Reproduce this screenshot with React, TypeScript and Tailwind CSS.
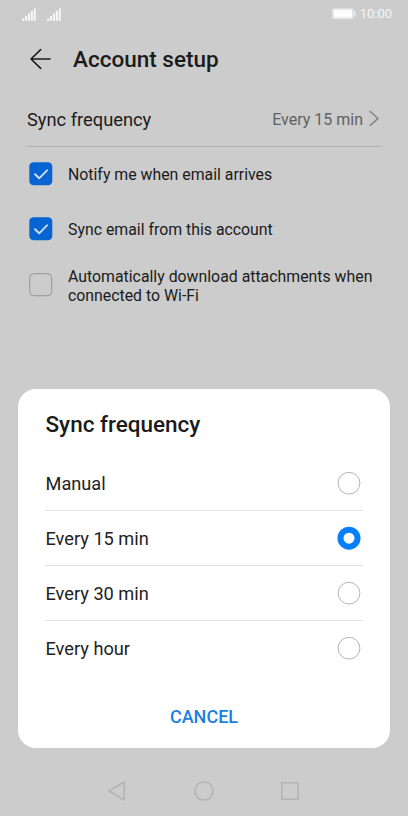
import { useState } from "react";

const frequencies = ["Manual", "Every 15 min", "Every 30 min", "Every hour"];

const initialSettings = [
  { id: "notify", label: "Notify me when email arrives", checked: true },
  { id: "sync", label: "Sync email from this account", checked: true },
  {
    id: "download",
    label: "Automatically download attachments when connected to Wi-Fi",
    checked: false,
  },
];

function SignalIcon() {
  return (
    <svg width="14" height="13" viewBox="0 0 14 13" fill="#f7f7f7">
      <rect x="0.2" y="10.3" width="2" height="2.5" />
      <rect x="3.1" y="8" width="2" height="4.8" />
      <rect x="6" y="5.3" width="2" height="7.5" />
      <rect x="8.9" y="2.9" width="2" height="9.9" />
      <rect x="11.8" y="0.4" width="2" height="12.4" />
    </svg>
  );
}

function BatteryIcon() {
  return (
    <svg width="24" height="12" viewBox="0 0 24 12">
      <rect x="0.2" y="0.3" width="21.4" height="10.9" rx="1.8" fill="#e4e4e4" />
      <rect x="1.8" y="1.8" width="18.2" height="7.8" rx="0.5" fill="#fcfcfc" />
      <rect x="22" y="3" width="1.3" height="5.4" rx="0.5" fill="#f0f0f0" />
    </svg>
  );
}

function Checkbox({ checked }: { checked: boolean }) {
  if (!checked) {
    return (
      <svg width="24" height="24" viewBox="0 0 24 24" className="shrink-0">
        <rect x="0.7" y="0.7" width="22" height="22" rx="4" fill="none" stroke="#979797" />
      </svg>
    );
  }
  return (
    <svg width="24" height="24" viewBox="0 0 24 24" className="shrink-0">
      <rect x="0.3" y="0.2" width="23" height="23" rx="4.2" fill="#0764d2" />
      <path
        d="M6 12.2l4.2 4.1 7.8-8"
        fill="none"
        stroke="#cfe0f3"
        strokeWidth="1.9"
        strokeLinecap="round"
        strokeLinejoin="round"
      />
    </svg>
  );
}

function Radio({ selected }: { selected: boolean }) {
  return (
    <svg width="24" height="24" viewBox="0 0 24 24" className="shrink-0">
      {selected ? (
        <circle cx="12" cy="12.2" r="8.5" fill="none" stroke="#077efb" strokeWidth="6" />
      ) : (
        <circle cx="12" cy="12.2" r="10.9" fill="none" stroke="#b4b4b4" strokeWidth="1" />
      )}
    </svg>
  );
}

export default function App() {
  const [settings, setSettings] = useState(initialSettings);
  const [frequency, setFrequency] = useState("Every 15 min");
  const [open, setOpen] = useState(true);

  function toggle(id: string) {
    setSettings(
      settings.map((s) => (s.id === id ? { ...s, checked: !s.checked } : s))
    );
  }

  return (
    <div className="relative flex h-[816px] w-[408px] flex-col overflow-hidden bg-[#cccccc] font-[Roboto,sans-serif] text-[#1b1b1b]">
      <div className="flex h-7 shrink-0 items-center justify-between pr-4 pl-[22px]">
        <div className="flex gap-[11px]">
          <SignalIcon />
          <SignalIcon />
        </div>
        <div className="flex items-center gap-1 text-[13px] text-[#f7f7f7]">
          <BatteryIcon />
          <span>10:00</span>
        </div>
      </div>

      <header className="flex h-[62px] shrink-0 items-center pl-[29px]">
        <svg
          width="24"
          height="24"
          viewBox="0 0 24 24"
          fill="none"
          stroke="#1b1b1b"
          strokeWidth="1.6"
          strokeLinecap="round"
          strokeLinejoin="round"
        >
          <path d="M21 12H2M11.7 2.7L2 12l9.7 9.4" />
        </svg>
        <h1 className="ml-5 pt-[2px] text-[22.5px] font-medium">Account setup</h1>
      </header>

      <main className="flex-1">
        <button
          onClick={() => setOpen(true)}
          className="mx-[27px] flex h-[57px] w-[354px] items-center border-b border-[#b0b0b0]"
        >
          <span className="pt-1 text-[18.3px]">Sync frequency</span>
          <span className="ml-auto pt-[3px] text-[16px] text-[#616161]">
            {frequency}
          </span>
          <svg
            width="18"
            height="18"
            viewBox="0 0 18 18"
            fill="none"
            stroke="#7f7f7f"
            strokeWidth="1.4"
            strokeLinecap="round"
          >
            <path d="M7.2 2.4l7.8 7-7.8 7" />
          </svg>
        </button>

        <div className="-mt-px">
          {settings.map((setting) => (
            <button
              key={setting.id}
              onClick={() => toggle(setting.id)}
              className="flex h-[55px] w-full items-center gap-[15px] pr-6 pl-[29px] text-left text-[15.85px] leading-[19px] last:h-[58px]"
            >
              <Checkbox checked={setting.checked} />
              <span className="pt-px">{setting.label}</span>
            </button>
          ))}
        </div>
      </main>

      <nav className="flex h-[50px] shrink-0 items-center justify-center gap-[66px]">
        {["back", "home", "recent"].map((item) => (
          <svg
            key={item}
            width="20"
            height="20"
            viewBox="0 0 20 20"
            fill="none"
            stroke="#b3b3b3"
            strokeWidth="1.5"
            strokeLinejoin="round"
          >
            {item === "back" && <path d="M16.3 1v18L0.8 10z" />}
            {item === "home" && <circle cx="10" cy="10" r="9.1" />}
            {item === "recent" && <rect x="1.8" y="1.8" width="16.4" height="16.4" />}
          </svg>
        ))}
      </nav>

      {open && (
        <section
          role="dialog"
          className="absolute top-[389px] left-[18px] flex h-[359px] w-[372px] flex-col rounded-[18px] bg-white px-[27px]"
        >
          <h2 className="flex h-[67px] items-center pt-[5px] pl-[0.5px] text-[22.5px] font-medium">
            Sync frequency
          </h2>
          <div>
            {frequencies.map((option) => (
              <button
                key={option}
                onClick={() => setFrequency(option)}
                className="flex h-[55px] w-full items-center justify-between border-b border-[#e2e2e2] pr-[2px] text-[18.2px] text-[#222222] last:border-transparent"
              >
                <span className="pt-[2px] pl-[0.5px]">{option}</span>
                <Radio selected={option === frequency} />
              </button>
            ))}
          </div>
          <button
            onClick={() => setOpen(false)}
            className="mt-auto mb-[11px] self-center px-4 py-2 text-[18px] leading-6 font-medium text-[#1a7fe0]"
          >
            CANCEL
          </button>
        </section>
      )}
    </div>
  );
}
